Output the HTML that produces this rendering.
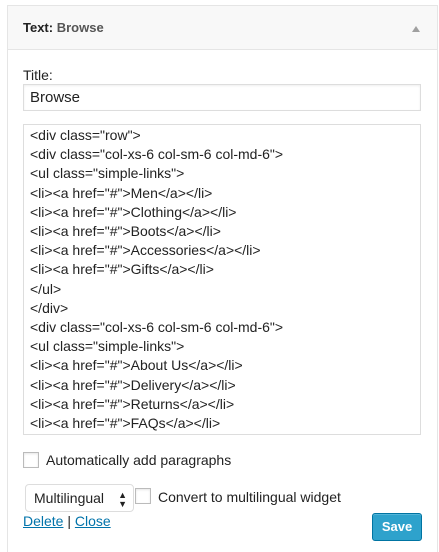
<!DOCTYPE html><html><head><style>
html,body{margin:0;width:439px;height:552px;overflow:hidden}
body{background:#fff;font-family:"Liberation Sans",sans-serif;color:#222;position:relative}
.box{position:absolute;left:7px;top:5px;width:429px;height:547px;border:1px solid #e5e5e5;border-bottom:none;background:#fff}
.hd{position:absolute;left:0;top:0;width:429px;height:43px;background:#f8f8f8;border-bottom:1px solid #e5e5e5}
.hd span{position:absolute;left:15px;top:14px;font-size:13px;font-weight:bold;color:#222}
.hd b{color:#555}
.arr{position:absolute;left:404px;top:20px;width:0;height:0;border-left:4px solid transparent;border-right:4px solid transparent;border-bottom:6px solid #a0a0a0}
.a{position:absolute}
.inp{left:23px;top:84px;border:1px solid #ddd;box-shadow:inset 0 1px 2px rgba(0,0,0,.07);font-size:15px;line-height:25px;padding-left:6px;box-sizing:border-box;width:398px;height:27px}
.ta{left:23px;top:124px;width:398px;height:311px;border:1px solid #ddd;box-sizing:border-box;padding:1px 6px;font-size:14px;line-height:19.2px;white-space:pre;overflow:hidden;color:#222}
.cb{width:16px;height:16px;border:1px solid #bbb;box-sizing:border-box;box-shadow:inset 0 1px 2px rgba(0,0,0,.1);background:#fff}
.sel{left:25px;top:484px;width:109px;height:28px;border:1px solid #ddd;border-radius:4px;box-sizing:border-box;font-size:14px;line-height:26px;padding-left:8px}
a{color:#0073aa;text-decoration:underline}
.btn{left:372px;top:513px;width:50px;height:28px;background:#2ea2cc;border:1px solid #0074a2;border-radius:3px;box-sizing:border-box;color:#fff;font-size:13px;font-weight:bold;text-align:center;line-height:26px;box-shadow:inset 0 1px 0 rgba(120,200,230,.5)}
</style></head><body>
<div class="box"><div class="hd"><span>Text: <b>Browse</b></span><div class="arr"></div></div></div>
<div class="a" style="left:23px;top:67px;font-size:14px">Title:</div>
<div class="a inp">Browse</div>
<div class="a ta">&lt;div class="row"&gt;
&lt;div class="col-xs-6 col-sm-6 col-md-6"&gt;
&lt;ul class="simple-links"&gt;
&lt;li&gt;&lt;a href="#"&gt;Men&lt;/a&gt;&lt;/li&gt;
&lt;li&gt;&lt;a href="#"&gt;Clothing&lt;/a&gt;&lt;/li&gt;
&lt;li&gt;&lt;a href="#"&gt;Boots&lt;/a&gt;&lt;/li&gt;
&lt;li&gt;&lt;a href="#"&gt;Accessories&lt;/a&gt;&lt;/li&gt;
&lt;li&gt;&lt;a href="#"&gt;Gifts&lt;/a&gt;&lt;/li&gt;
&lt;/ul&gt;
&lt;/div&gt;
&lt;div class="col-xs-6 col-sm-6 col-md-6"&gt;
&lt;ul class="simple-links"&gt;
&lt;li&gt;&lt;a href="#"&gt;About Us&lt;/a&gt;&lt;/li&gt;
&lt;li&gt;&lt;a href="#"&gt;Delivery&lt;/a&gt;&lt;/li&gt;
&lt;li&gt;&lt;a href="#"&gt;Returns&lt;/a&gt;&lt;/li&gt;
&lt;li&gt;&lt;a href="#"&gt;FAQs&lt;/a&gt;&lt;/li&gt;</div>
<div class="a cb" style="left:23px;top:452px"></div>
<div class="a" style="left:46px;top:452px;font-size:14px">Automatically add paragraphs</div>
<div class="a sel">Multilingual<span style="position:absolute;right:6px;font-size:9px;line-height:9px;top:6px">▲<br>▼</span></div>
<div class="a cb" style="left:135px;top:488px"></div>
<div class="a" style="left:158px;top:489px;font-size:14px">Convert to multilingual widget</div>
<div class="a" style="left:23px;top:513px;font-size:14px"><a>Delete</a> | <a>Close</a></div>
<div class="a btn">Save</div>
</body></html>
